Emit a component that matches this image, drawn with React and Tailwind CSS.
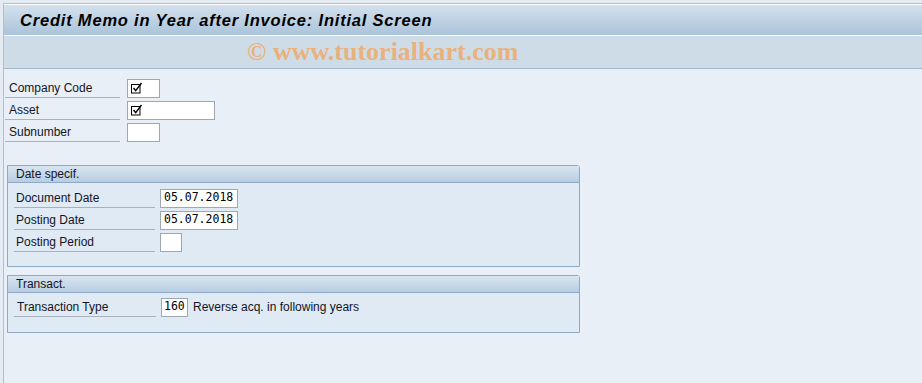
import React from 'react'

function CheckGlyph() {
  return (
    <svg width="12" height="12" viewBox="0 0 12 12" className="ml-[3px]">
      <rect x="0.5" y="2.5" width="8.5" height="8.5" fill="none" stroke="#000" strokeWidth="1" />
      <path d="M2.5 6 L4.7 8.6 L10.5 1" fill="none" stroke="#000" strokeWidth="1.4" />
    </svg>
  )
}

function Field({ width, children, mono }) {
  return (
    <div
      className={`flex h-[19px] items-center border border-[#9ea8b3] bg-white ${mono ? "font-['DejaVu_Sans_Mono',monospace] text-[11.5px] text-black" : ''}`}
      style={{ width }}
    >
      {children}
    </div>
  )
}

function Row({ label, labelWidth, gap, children }) {
  return (
    <div className="flex h-[22px] items-center">
      <div
        className="flex h-[19px] items-center border-b border-[#a9b2bc] pl-[2px] text-[12px] text-[#141424]"
        style={{ width: labelWidth, marginRight: gap }}
      >
        {label}
      </div>
      {children}
    </div>
  )
}

function Group({ title, children, bodyClass }) {
  return (
    <section className="ml-[3px] w-[573px] rounded-tr-[3px] border border-[#8fa9c6] bg-[#dfeaf4]">
      <div className="flex h-[17px] items-center border-b border-[#8fa9c6] bg-gradient-to-b from-[#d8e5f1] to-[#b8cde2] pl-[8px] text-[12px] text-[#141424]">
        {title}
      </div>
      <div className={bodyClass}>{children}</div>
    </section>
  )
}

export default function App() {
  return (
    <div className="h-[383px] w-[922px] overflow-hidden bg-[#e4ebf2] pl-[3px] pt-[3px] font-['Liberation_Sans',Arial,sans-serif]">
      <div className="h-[380px] border-l border-t border-[#b2bfcd] bg-[#e9eff6]">
        <div className="flex h-[32px] items-center border-b border-t border-white bg-gradient-to-b from-[#d3e1ed] to-[#abc3da] pl-[16px]">
          <h1 className="text-[16.5px] font-bold italic tracking-[0.8px] text-black">Credit Memo in Year after Invoice: Initial Screen</h1>
        </div>
        <div className="flex h-[33px] items-center border-b border-[#a6b6c9] bg-[#cedce8] pl-[243px]">
          <span className="font-['Liberation_Serif',serif] text-[26px] font-bold leading-none text-[#e9b27c]">
            © www.tutorialkart.com
          </span>
        </div>

        <div className="pl-[1px] pt-[8px]">
          <Row label={<span className="pl-[2px]">Company Code</span>} labelWidth={115} gap={7}>
            <Field width={33}><CheckGlyph /></Field>
          </Row>
          <Row label={<span className="pl-[2px]">Asset</span>} labelWidth={115} gap={7}>
            <Field width={88}><CheckGlyph /></Field>
          </Row>
          <Row label={<span className="pl-[2px]">Subnumber</span>} labelWidth={115} gap={7}>
            <Field width={33} />
          </Row>
        </div>

        <div className="mt-[22px]">
          <Group title="Date specif." bodyClass="pl-[6px] pt-[4px] pb-[13px]">
            <Row label="Document Date" labelWidth={141} gap={5}>
              <Field width={78} mono><span className="pl-[3px]">05.07.2018</span></Field>
            </Row>
            <Row label="Posting Date" labelWidth={141} gap={5}>
              <Field width={78} mono><span className="pl-[3px]">05.07.2018</span></Field>
            </Row>
            <Row label="Posting Period" labelWidth={141} gap={5}>
              <Field width={22} />
            </Row>
          </Group>
        </div>

        <div className="mt-[8px]">
          <Group title="Transact." bodyClass="pl-[6px] pt-[3px] pb-[14px]">
            <Row label={<span className="pl-[1px]">Transaction Type</span>} labelWidth={142} gap={5}>
              <Field width={27} mono><span className="pl-[2px]">160</span></Field>
              <span className="ml-[5px] text-[12px] text-[#141424]">Reverse acq. in following years</span>
            </Row>
          </Group>
        </div>
      </div>
    </div>
  )
}
